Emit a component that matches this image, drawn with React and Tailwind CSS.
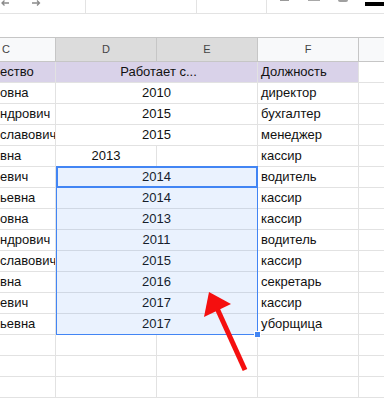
import React from "react";

const rows = [
  { c: "ество", de: "Работает с...", f: "Должность", purple: true },
  { c: "овна", de: "2010", f: "директор" },
  { c: "ндрович", de: "2015", f: "бухгалтер" },
  { c: "славович", de: "2015", f: "менеджер" },
  { c: "вна", d: "2013", f: "кассир" },
  { c: "евич", de: "2014", f: "водитель" },
  { c: "ьевна", de: "2014", f: "кассир" },
  { c: "овна", de: "2013", f: "кассир" },
  { c: "ндрович", de: "2011", f: "водитель" },
  { c: "славович", de: "2015", f: "кассир" },
  { c: "вна", de: "2016", f: "секретарь" },
  { c: "евич", de: "2017", f: "кассир" },
  { c: "ьевна", de: "2017", f: "уборщица" },
  { c: "", de: "", f: "", empty: true },
  { c: "", de: "", f: "", empty: true },
  { c: "", de: "", f: "", empty: true },
];

function Row({ r }) {
  const bg = r.purple ? "bg-[#d9d2e9]" : "";
  return (
    <div className="flex h-[21px] border-b border-[#e2e2e2] text-[13px] leading-[20px] text-[#111]">
      <div className={`w-[56px] shrink-0 border-r border-[#e2e2e2] overflow-hidden whitespace-nowrap ${bg}`}>
        {r.c}
      </div>
      {r.empty ? (
        <>
          <div className="w-[101px] shrink-0 border-r border-[#e2e2e2]" />
          <div className="w-[101px] shrink-0 border-r border-[#e2e2e2]" />
        </>
      ) : r.d ? (
        <>
          <div className="w-[101px] shrink-0 border-r border-[#e2e2e2] text-center">{r.d}</div>
          <div className="w-[101px] shrink-0 border-r border-[#e2e2e2]" />
        </>
      ) : (
        <div className={`w-[202px] shrink-0 border-r border-[#e2e2e2] text-center whitespace-nowrap ${bg}`}>
          {r.purple ? <span className="pl-[4px]">{r.de}</span> : r.de}
        </div>
      )}
      <div className={`w-[101px] shrink-0 border-r border-[#e2e2e2] pl-[3px] whitespace-nowrap ${bg}`}>
        {r.f}
      </div>
      <div className="flex-1" />
    </div>
  );
}

export default function App() {
  return (
    <div
      className="relative w-[384px] h-[399px] overflow-hidden bg-white"
      style={{ fontFamily: '"Liberation Sans", Arial, sans-serif' }}
    >
      {/* toolbar */}
      <div className="flex h-[14px] border-b border-[#e3e3e3]">
        <div className="w-[86px] shrink-0 border-r border-[#e3e3e3] relative">
          <svg className="absolute left-[1px] top-[0px]" width="10" height="6" viewBox="0 0 10 6">
            <path d="M1 3 H8 M3.5 0.5 L1 3 L3.5 5.5" stroke="#8a8a8a" strokeWidth="1.3" fill="none" />
          </svg>
          <svg className="absolute left-[31px] top-[0px]" width="10" height="6" viewBox="0 0 10 6">
            <path d="M1 3 H8.5 M6 0.5 L8.5 3 L6 5.5" stroke="#8a8a8a" strokeWidth="1.3" fill="none" />
          </svg>
        </div>
        <div className="w-[111px] shrink-0 border-r border-[#e3e3e3]" />
        <div className="w-[70px] shrink-0 border-r border-[#e3e3e3]" />
        <div className="flex-1 relative">
          <div className="absolute left-[13px] top-0 w-[9px] h-[1px] bg-[#9a9a9a]" />
          <div className="absolute left-[41px] top-0 w-[12px] h-[1px] bg-[#a8a8a8]" />
          <div className="absolute left-[71px] top-0 w-[10px] h-[2px] rounded-b-full bg-[#a0a0a0]" />
          <div className="absolute left-[98px] top-[2px] w-[20px] h-[4px] bg-black" />
        </div>
      </div>
      {/* blank formula area */}
      <div className="h-[23px]" />
      {/* column headers */}
      <div className="flex h-[25px] border-y border-[#c6c6c6] text-[11px] leading-[23px] text-[#444]">
        <div className="w-[56px] shrink-0 border-r border-[#c6c6c6] bg-[#f8f9fa] pl-[2px]">C</div>
        <div className="w-[101px] shrink-0 border-r border-[#c6c6c6] bg-[#dcdcdc] text-center">D</div>
        <div className="w-[101px] shrink-0 border-r border-[#c6c6c6] bg-[#dcdcdc] text-center">E</div>
        <div className="w-[101px] shrink-0 border-r border-[#c6c6c6] bg-[#f8f9fa] text-center">F</div>
        <div className="flex-1 bg-[#f8f9fa]" />
      </div>
      {rows.map((r, i) => (
        <Row key={i} r={r} />
      ))}

      {/* selection overlay */}
      <div className="absolute left-[56px] top-[166px] w-[202px] h-[169px] border border-[#4285f4] bg-[#4285f4]/[0.11] pointer-events-none" />
      <div className="absolute left-[56px] top-[166px] w-[202px] h-[22px] border-2 border-[#4285f4] pointer-events-none" />
      <div className="absolute left-[254px] top-[331px] w-[7px] h-[7px] bg-[#4285f4] border border-white" />

      {/* red arrow */}
      <svg className="absolute left-0 top-0 pointer-events-none" width="384" height="399" viewBox="0 0 384 399">
        <line x1="245" y1="370" x2="216" y2="306" stroke="#f50f0f" strokeWidth="5" />
        <polygon points="209,292 204,317 231,304" fill="#f50f0f" />
      </svg>
    </div>
  );
}
